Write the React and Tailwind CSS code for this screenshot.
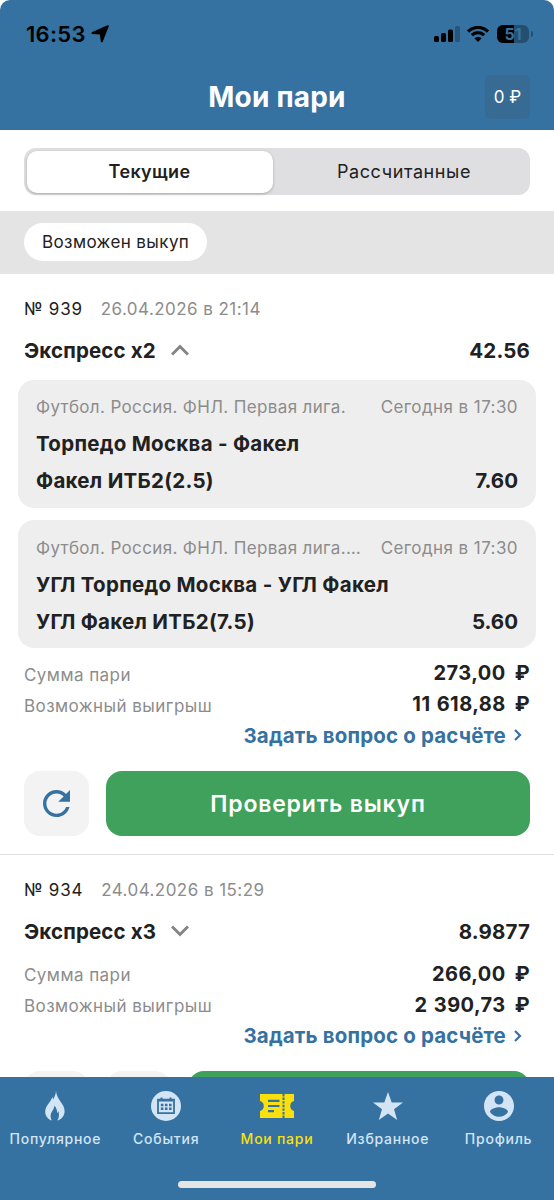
import React, { useState } from 'react';

// =========================================================================
// 1. DATA
// =========================================================================
const BETS = [
  {
    id: '939',
    date: '26.04.2026 в 21:14',
    title: 'Экспресс x2',
    odds: '42.56',
    stake: '273,00',
    win: '11 618,88',
    expanded: true,
    events: [
      { league: 'Футбол. Россия. ФНЛ. Первая лига.', time: 'Сегодня в 17:30', match: 'Торпедо Москва - Факел', pick: 'Факел ИТБ2(2.5)', odds: '7.60' },
      { league: 'Футбол. Россия. ФНЛ. Первая лига.…', time: 'Сегодня в 17:30', match: 'УГЛ Торпедо Москва - УГЛ Факел', pick: 'УГЛ Факел ИТБ2(7.5)', odds: '5.60' },
    ],
  },
  {
    id: '934',
    date: '24.04.2026 в 15:29',
    title: 'Экспресс x3',
    odds: '8.9877',
    stake: '266,00',
    win: '2 390,73',
    expanded: false,
    events: [],
  },
];

// =========================================================================
// 2. ICONS
// =========================================================================
const FlameIcon = () => (
  <svg width="20" height="30" viewBox="0 0 20 30" fill="currentColor">
    <path d="M11 0c-.2 3.200-1.300 5.600-2.800 8.400C8 7.400 7.600 6.700 7.100 6 6.700 10.500 0 14.500.2 21c.1 4 2.600 7.200 6.600 8.600-1.900-3.600-1.400-6.600.3-9.300 1.300-1.900 2.200-3.600 2.300-5.800 2 2.400 2.900 4.800 2.700 7.500.6-.6.9-1.300 1.100-2.100 1.400 3.400 1 6.900-1 9.700 4.700-1.300 7.400-5 7.400-9.600C19.600 12.500 11.900 9.500 11 0z" />
  </svg>
);

const EventsIcon = () => (
  <svg width="30" height="30" viewBox="0 0 30 30">
    <circle cx="15" cy="15" r="15" fill="currentColor" />
    <path fill="none" stroke="#3572a2" strokeWidth="1.800" d="M7 8.700h16v13.400H7z" />
    <path stroke="#3572a2" strokeWidth="2" d="M7 9.500h16M10.500 6.500v3M19.500 6.500v3" />
    <path stroke="#3572a2" strokeWidth="2.400" strokeDasharray="2.600 1.500" d="M9.800 14h11.200M9.800 17.800h11.200" />
  </svg>
);

const TicketIcon = () => (
  <svg width="34" height="24" viewBox="0 0 34 24">
    <path fill="currentColor" d="M0 0h34v7a5.200 5.200 0 0 0 0 10v7H0v-7a5.200 5.200 0 0 0 0-10z" />
    <path stroke="#3572a2" strokeWidth="2.200" d="M8 6.800h11.500M8 12h11.500M8 17.200h6" />
    <path stroke="#3572a2" strokeWidth="2" strokeDasharray="2.400 1.200" d="M23.500 0v24" />
  </svg>
);

const StarIcon = () => (
  <svg width="30" height="28" viewBox="0 0 30 28" fill="currentColor">
    <path d="M15 0l3.700 10.400H30l-9 6.800L24.200 28 15 21.500 5.800 28 9 17.200l-9-6.800h11.300z" />
  </svg>
);

const ProfileIcon = () => (
  <svg width="30" height="30" viewBox="2 2 20 20" fill="currentColor">
    <path d="M12 2C6.480 2 2 6.480 2 12s4.480 10 10 10 10-4.480 10-10S17.520 2 12 2zm0 3c1.660 0 3 1.340 3 3s-1.340 3-3 3-3-1.340-3-3 1.340-3 3-3zm0 14.200c-2.500 0-4.710-1.280-6-3.220.03-1.990 4-3.080 6-3.080 1.990 0 5.970 1.090 6 3.080-1.290 1.940-3.500 3.220-6 3.220z" />
  </svg>
);

const RefreshIcon = () => (
  <svg width="27" height="27" viewBox="4 4 16 16" fill="#3572a2">
    <path d="M17.650 6.350C16.200 4.900 14.210 4 12 4c-4.420 0-7.990 3.580-7.990 8s3.570 8 7.990 8c3.730 0 6.840-2.550 7.730-6h-2.080c-.82 2.330-3.040 4-5.650 4-3.310 0-6-2.690-6-6s2.690-6 6-6c1.660 0 3.140.69 4.220 1.780L13 11h7V4l-2.350 2.350z" />
  </svg>
);

const TABS = [
  { label: 'Популярное', Icon: FlameIcon },
  { label: 'События', Icon: EventsIcon },
  { label: 'Мои пари', Icon: TicketIcon },
  { label: 'Избранное', Icon: StarIcon },
  { label: 'Профиль', Icon: ProfileIcon },
];

// =========================================================================
// 3. UI COMPONENTS
// =========================================================================
const StatusBar = () => (
  <div className="flex h-[68px] items-center justify-between pl-[26px] pr-[21px] text-black">
    <div className="flex items-center gap-[5px]">
      <span className="text-[22px] font-semibold tracking-[0.300px]">16:53</span>
      <svg width="18" height="18" viewBox="0 0 18 18">
        <path d="M16.600.3Q18.200-.2 17.700 1.400L11.700 16.700Q10.700 18.200 9.900 16.700L8.800 9.600 1.300 9Q-.4 8.200 1.300 7.100z" />
      </svg>
    </div>
    <div className="flex items-center">
      <svg width="26" height="16" viewBox="0 0 26 16">
        <rect x="0" y="10" width="5" height="6" rx="1.500" />
        <rect x="7" y="7" width="5" height="9" rx="1.500" />
        <rect x="14" y="3.500" width="5" height="12.500" rx="1.500" />
        <rect x="21" y="0" width="5" height="16" rx="1.500" fillOpacity=".25" />
      </svg>
      <svg className="ml-[7px]" width="22" height="16" viewBox="0 0 22 16" fill="none" stroke="#000" strokeWidth="3.200">
        <path d="M1.100 5.500a14 14 0 0 1 19.800 0M4.900 9.200a8.700 8.700 0 0 1 12.200 0" />
        <path fill="#000" stroke="none" d="M7.400 12.300a5 5 0 0 1 7.200 0L11 16z" />
      </svg>
      <div className="relative ml-2 flex h-[18px] w-8 items-center justify-center overflow-hidden rounded-[6px] bg-black/30">
        <div className="absolute inset-y-0 left-0 w-[17px] bg-black"></div>
        <span className="relative text-[16px] font-bold leading-none text-[#3572a2]">51</span>
      </div>
      <div className="ml-[2px] h-[6px] w-[2px] rounded-r bg-black/30"></div>
    </div>
  </div>
);

const EventCard = ({ event }) => (
  <div className="h-[128px] rounded-[16px] bg-[#eeeeee] px-[18px] pt-[9px] text-[20.500px] font-bold tracking-[0.280px]">
    <div className="flex h-[36px] items-center justify-between pt-[2px] text-[17px] font-normal text-[#8c8c8c]">
      <span className="whitespace-nowrap tracking-[0.360px]">{event.league}</span>
      <span className="whitespace-nowrap tracking-[0.420px]">{event.time}</span>
    </div>
    <div className="flex h-[37px] items-center pt-[2px]">{event.match}</div>
    <div className="flex h-[37px] items-center justify-between pt-[2px]">
      <span>{event.pick}</span>
      <span className="tracking-normal">{event.odds}</span>
    </div>
  </div>
);

const SumRow = ({ label, value }) => (
  <div className="flex h-[31px] items-center justify-between">
    <span className="pt-[4px] text-[17px] tracking-[0.450px] text-[#8c8c8c]">{label}</span>
    <span className="flex gap-[9px] text-[20px] font-bold tracking-[0.450px] [word-spacing:1px]">
      {value}
      <span>₽</span>
    </span>
  </div>
);

const BetCard = ({ bet }) => (
  <section className="h-[581px] shrink-0 border-b border-[#dedede] px-6 pt-[18px]">
    <div className="flex h-[36px] items-center gap-[18px] text-[17px]">
      <span className="tracking-[0.750px]">№ {bet.id}</span>
      <span className="tracking-[0.450px] text-[#8c8c8c]">{bet.date}</span>
    </div>
    <div className="flex h-[45px] items-center text-[20.500px] font-bold tracking-[0.150px]">
      <span className="pt-px">{bet.title}</span>
      <svg className="-mt-[2px] ml-[15px]" width="18" height="12" viewBox="0 0 18 12" fill="none" stroke="#848484" strokeWidth="3">
        <path d={bet.expanded ? 'M1 10.500L9 2.500l8 8' : 'M1 1.500l8 8 8-8'} />
      </svg>
      <span className="ml-auto pt-px">{bet.odds}</span>
    </div>
    {bet.expanded && (
      <div className="-mx-[6px] mt-[7px] flex flex-col gap-[12.400px]">
        {bet.events.map((event) => <EventCard key={event.match} event={event} />)}
      </div>
    )}
    <div className={bet.expanded ? 'pt-[9.600px]' : 'pt-[4px]'}>
      <SumRow label="Сумма пари" value={bet.stake} />
      <SumRow label="Возможный выигрыш" value={bet.win} />
      <div className="flex h-[31px] items-center justify-end gap-[8px] pr-2 text-[20.500px] font-bold tracking-[0.150px] text-[#3572a2]">
        <span className="pt-px">Задать вопрос о расчёте</span>
        <svg width="8" height="12" viewBox="0 0 8 12" fill="none" stroke="currentColor" strokeWidth="2.200">
          <path d="M1 1l5 5-5 5" />
        </svg>
      </div>
    </div>
    <div className="mt-[20px] flex gap-[17px]">
      <button className="flex h-[65px] w-[65px] items-center justify-center rounded-[16px] bg-[#f3f3f3] pt-px">
        {bet.expanded && <RefreshIcon />}
      </button>
      {!bet.expanded && <button className="h-[65px] w-[65px] rounded-[16px] bg-[#f3f3f3]"></button>}
      <button className="h-[65px] flex-1 rounded-[16px] bg-[#3fa15b] pt-px text-[23px] font-semibold tracking-[0.800px] text-white">
        {/* the collapsed bet's caption stays hidden under the bottom bar */}
        {bet.expanded && 'Проверить выкуп'}
      </button>
    </div>
  </section>
);

const BottomNav = () => (
  <nav className="h-[123px] shrink-0 bg-[#3572a2]">
    <div className="grid grid-cols-5">
      {TABS.map(({ label, Icon }, i) => (
        <div key={label} className={`flex flex-col items-center ${i === 2 ? 'text-[#fbe00c]' : 'text-[#d3e5f5]'}`}>
          <div className="mt-[13px] flex h-[31px] items-center">
            <Icon />
          </div>
          <span className="mt-[8px] text-[14px] font-medium leading-5 tracking-[0.750px]">{label}</span>
        </div>
      ))}
    </div>
    <div className="mx-auto mt-[32px] h-[7px] w-[198px] rounded-full bg-[#e5e5e5]"></div>
  </nav>
);

// =========================================================================
// 4. MAIN PAGE
// =========================================================================
export default function App() {
  const [tab, setTab] = useState('current');

  return (
    <div className="flex h-[1200px] w-[554px] flex-col overflow-hidden bg-white font-['Inter','Liberation_Sans',sans-serif] text-[#212121]">
      <header className="h-[130px] shrink-0 rounded-t-[10px] bg-[#3572a2]">
        <StatusBar />
        <div className="grid h-[57px] grid-cols-[1fr_auto_1fr] items-center px-6">
          <h1 className="col-start-2 text-[28px] font-bold tracking-[0.200px] text-white">Мои пари</h1>
          <div className="flex h-[44px] w-[45px] items-center justify-center justify-self-end rounded-[6px] bg-[#376b94] pt-[2px] text-[17px] text-white">0 ₽</div>
        </div>
      </header>

      <div className="mx-6 mt-[18px] grid h-[47px] shrink-0 grid-cols-[246px_1fr] rounded-[12px] bg-[#dfdfe1] p-[2.500px] text-[18px]">
        <button onClick={() => setTab('current')} className={`rounded-[10px] tracking-[0.350px] ${tab === 'current' ? 'bg-white font-semibold shadow-[0_1px_3px_rgba(0,0,0,0.25)]' : ''}`}>Текущие</button>
        <button onClick={() => setTab('settled')} className={`rounded-[10px] pl-2 tracking-[0.600px] ${tab === 'settled' ? 'bg-white font-semibold shadow-[0_1px_3px_rgba(0,0,0,0.25)]' : ''}`}>Рассчитанные</button>
      </div>

      <div className="mt-4 flex h-[63px] shrink-0 items-start bg-[#e4e4e4] px-6 pt-3">
        <button className="h-[38px] rounded-full bg-white px-[18px] pt-px text-[17px] tracking-[0.400px]">Возможен выкуп</button>
      </div>

      <main className="flex min-h-0 flex-1 flex-col overflow-hidden">
        {BETS.map((bet) => <BetCard key={bet.id} bet={bet} />)}
      </main>

      <BottomNav />
    </div>
  );
}
